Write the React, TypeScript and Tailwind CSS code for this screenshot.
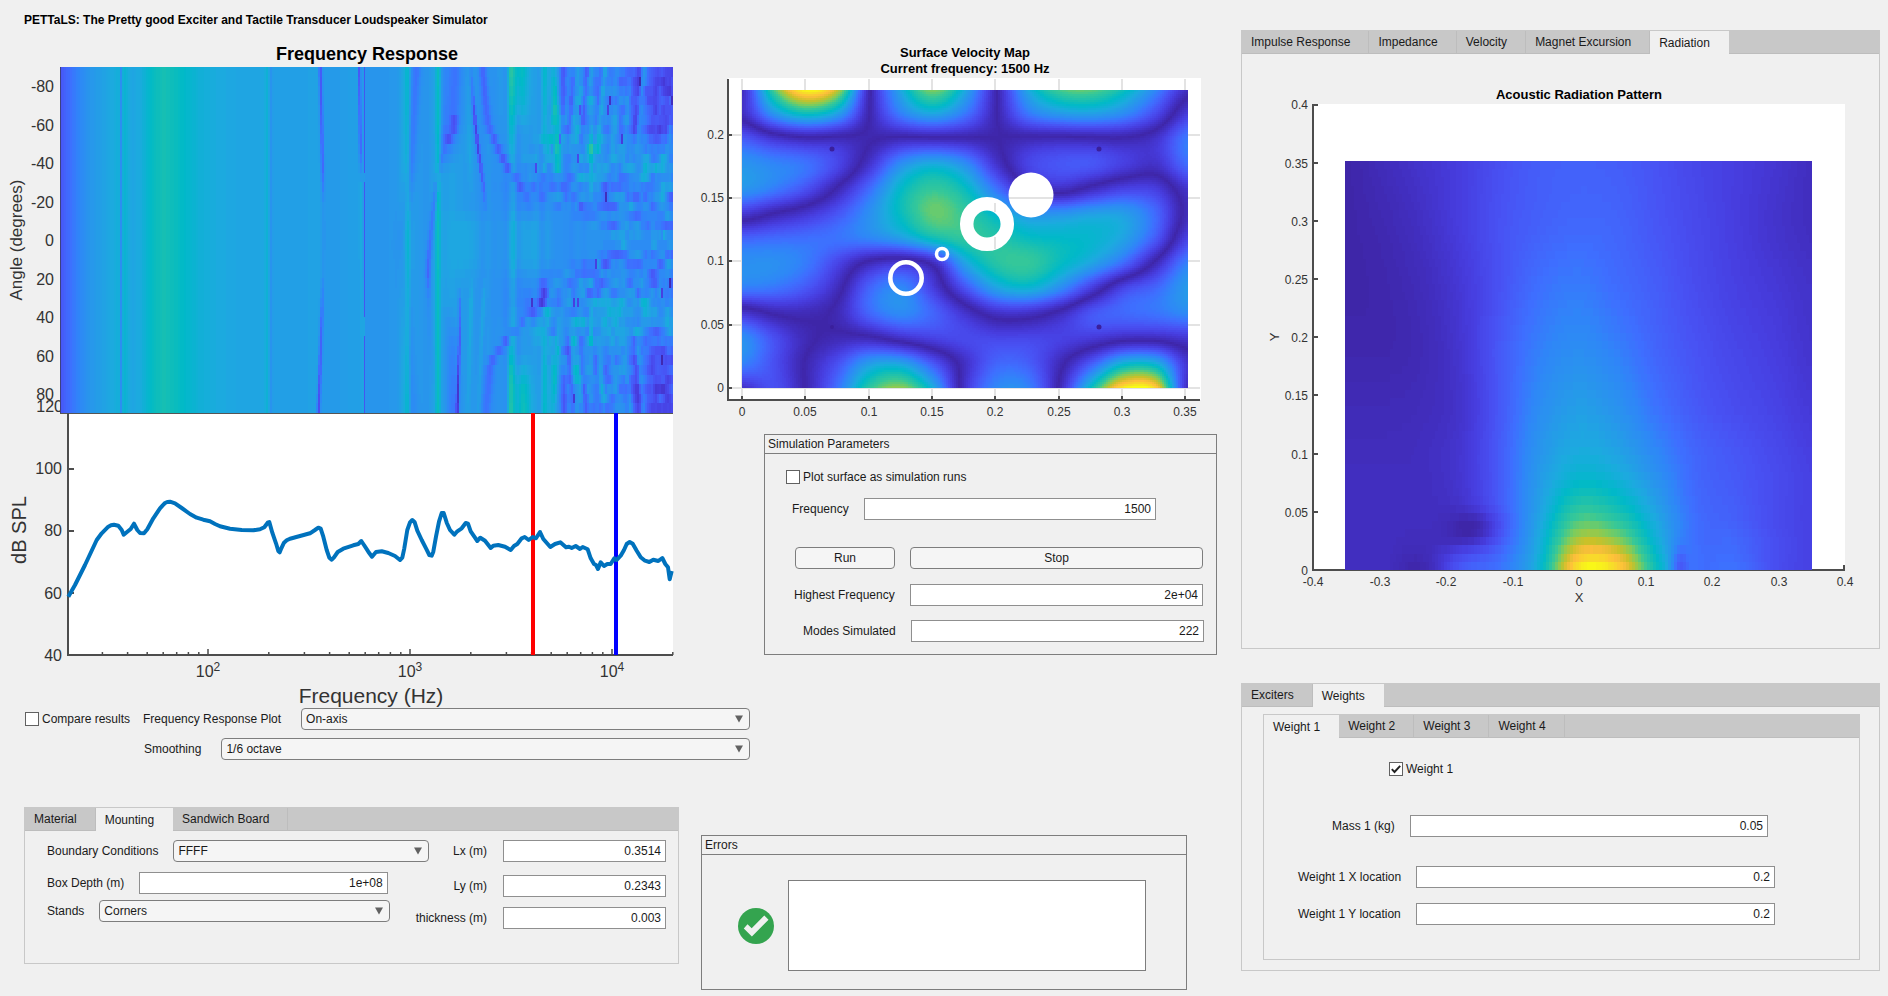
import React, { useId, useMemo } from "react";

const PARULA: [number, number, number, number][] = [
  [0, 62, 38, 168],
  [0.06, 66, 48, 196],
  [0.12, 71, 62, 224],
  [0.19, 72, 82, 244],
  [0.27, 62, 111, 255],
  [0.33, 46, 135, 247],
  [0.39, 39, 151, 235],
  [0.45, 28, 170, 223],
  [0.52, 0, 185, 200],
  [0.57, 24, 191, 178],
  [0.64, 55, 200, 151],
  [0.72, 129, 204, 89],
  [0.8, 201, 193, 41],
  [0.88, 254, 190, 60],
  [0.95, 246, 225, 38],
  [1, 249, 251, 21],
];

const LEVELS = 120;

function parula(t: number): string {
  for (let i = 1; i < PARULA.length; i++) {
    const [t1, r1, g1, b1] = PARULA[i];
    if (t <= t1) {
      const [t0, r0, g0, b0] = PARULA[i - 1];
      const f = (t - t0) / (t1 - t0);
      return `rgb(${Math.round(r0 + (r1 - r0) * f)},${Math.round(g0 + (g1 - g0) * f)},${Math.round(b0 + (b1 - b0) * f)})`;
    }
  }
  return "rgb(249,251,21)";
}

const clamp = (v: number, a: number, b: number) => Math.min(b, Math.max(a, v));

/** Catmull-Rom interpolation through p1..p2 */
function cubic(p0: number, p1: number, p2: number, p3: number, t: number) {
  return (
    p1 +
    0.5 * t * (p2 - p0 + t * (2 * p0 - 5 * p1 + 4 * p2 - p3 + t * (3 * (p1 - p2) + p3 - p0)))
  );
}

function sampleRow(row: number[], u: number) {
  const n = row.length;
  const i = clamp(Math.floor(u), 0, n - 2);
  const at = (k: number) => row[clamp(k, 0, n - 1)];
  return cubic(at(i - 1), at(i), at(i + 1), at(i + 2), u - i);
}

/** Bicubic sample; rows continue linearly past the first and last one. */
function sampleGrid(grid: number[][], u: number, v: number) {
  const n = grid.length;
  const j = clamp(Math.floor(v), 0, n - 2);
  const at = (k: number): number => {
    if (k < 0) return 2 * sampleRow(grid[0], u) - sampleRow(grid[1], u);
    if (k > n - 1) return 2 * sampleRow(grid[n - 1], u) - sampleRow(grid[n - 2], u);
    return sampleRow(grid[k], u);
  };
  return cubic(at(j - 1), at(j), at(j + 1), at(j + 2), v - j);
}

function piecewise(points: [number, number][], x: number) {
  if (x <= points[0][0]) return points[0][1];
  for (let i = 1; i < points.length; i++) {
    if (x <= points[i][0]) {
      const [x0, y0] = points[i - 1];
      const [x1, y1] = points[i];
      return y0 + ((y1 - y0) * (x - x0)) / (x1 - x0);
    }
  }
  return points[points.length - 1][1];
}

type HeatProps = {
  x: number;
  y: number;
  width: number;
  height: number;
  cols: number;
  rows: number;
  value: (u: number, v: number, col: number, row: number) => number;
};

/** Colour-mapped image; runs of one colour are merged into a single path. */
function Heat({ x, y, width, height, cols, rows, value }: HeatProps) {
  const paths = useMemo(() => {
    const byLevel: string[][] = Array.from({ length: LEVELS + 1 }, () => []);
    const cw = width / cols;
    const ch = height / rows;
    for (let r = 0; r < rows; r++) {
      const y0 = (y + r * ch).toFixed(2);
      let start = 0;
      let level = -1;
      for (let c = 0; c <= cols; c++) {
        const next =
          c < cols
            ? Math.round(clamp(value((c + 0.5) / cols, (r + 0.5) / rows, c, r), 0, 1) * LEVELS)
            : -2;
        if (next !== level) {
          if (level >= 0) {
            const w = ((c - start) * cw).toFixed(2);
            byLevel[level].push(`M${(x + start * cw).toFixed(2)} ${y0}h${w}v${ch.toFixed(2)}h-${w}z`);
          }
          start = c;
          level = next;
        }
      }
    }
    return byLevel;
  }, [x, y, width, height, cols, rows, value]);
  return (
    <g shapeRendering="crispEdges">
      <rect x={x} y={y} width={width} height={height} fill="#4556f0" />
      {paths.map((d, i) => (d.length ? <path key={i} d={d.join("")} fill={parula(i / LEVELS)} /> : null))}
    </g>
  );
}

/* ---------- surface velocity field (signed, percent) ---------- */

const SURFACE = [
  [5, 66, 100, 80, 2, -45, -72, -45, 0, 45, 66, 68, 55, 33, 5],
  [4, 36, 52, 40, 0, -30, -42, -28, 0, 28, 38, 40, 33, 15, -12],
  [-22, -10, -4, -4, -1, 4, 4, 3, 0, -3, -4, -3, -2, -8, -30],
  [-38, -33, -28, -15, 8, 36, 46, 36, 8, -14, -20, -20, -12, -7, -26],
  [-38, -30, -18, 2, 26, 52, 63, 54, 28, 2, -5, 5, 14, 12, -8],
  [-9, 1, 9, 20, 36, 54, 69, 63, 50, 38, 38, 42, 41, 25, -4],
  [24, 26, 27, 28, 32, 40, 54, 62, 60, 54, 52, 50, 42, 20, -14],
  [36, 36, 30, 14, -4, -10, 3, 42, 60, 63, 53, 42, 24, -4, -32],
  [30, 28, 20, 4, -24, -34, -12, 18, 42, 48, 34, 10, -15, -25, -40],
  [-9, 1, 3, -3, -24, -34, -24, -8, 6, 6, -4, -20, -25, -28, -34],
  [-36, -18, -3, 3, 3, -6, -13, -16, -15, -15, -13, -10, -4, -4, -9],
  [-32, -18, 1, 18, 40, 42, 20, -6, -24, -22, -3, 22, 48, 46, 8],
  [-6, -18, 1, 28, 62, 74, 46, -8, -34, -32, 4, 56, 98, 92, 4],
].map((row) => row.map((v) => v / 100));

const surfaceValue = (u: number, v: number) => Math.abs(sampleGrid(SURFACE, u * 14, v * 12));

/* ---------- radiation field (percent) ---------- */

const RADIATION_Y = [344, 500, 650, 800, 950, 1050, 1120, 1180, 1230, 1275, 1310, 1348];
const RADIATION = [
  [0, 4, 8, 12, 18, 22, 23, 22, 19, 15, 12, 9, 5],
  [0, 2, 6, 12, 19, 23, 25, 24, 20, 16, 12, 8, 5],
  [0, 1, 4, 10, 19, 27, 30, 26, 22, 17, 13, 10, 7],
  [1, 1, 3, 9, 21, 31, 35, 31, 24, 19, 15, 12, 8],
  [3, 3, 4, 8, 21, 35, 41, 37, 28, 21, 17, 14, 10],
  [4, 4, 5, 9, 22, 38, 45, 42, 33, 24, 20, 16, 12],
  [5, 5, 5, 9, 22, 40, 50, 47, 37, 25, 21, 17, 13],
  [5, 5, 5, 8, 22, 42, 58, 54, 41, 26, 22, 17, 13],
  [5, 5, 5, 6, 20, 44, 67, 62, 45, 27, 23, 17, 13],
  [5, 5, 4, 7, 22, 46, 77, 73, 48, 27, 25, 18, 13],
  [5, 5, 3, 16, 26, 48, 88, 85, 52, 28, 26, 18, 13],
  [5, 5, 1, 22, 29, 50, 98, 94, 56, 28, 28, 18, 13],
].map((row) => row.map((v) => v / 100));

const RADIATION_ROWS: [number, number][] = RADIATION_Y.map((y, i) => [y, i]);

const radiationValue = (u: number, v: number) => {
  const y = 344 + v * 1004;
  const x = 275 + u * 1113;
  const base = sampleGrid(RADIATION, u * 12, piecewise(RADIATION_ROWS, y));
  const blob = 0.09 * Math.exp(-(((x - 585) / 50) ** 2) - ((y - 1245) / 38) ** 2);
  const notch = 0.15 * Math.exp(-(((x - 1073) / 20) ** 2) - ((y - 1340) / 45) ** 2);
  return base - blob - notch;
};

/* ---------- polar frequency response ---------- */

const PROFILE: [number, number][] = [
  [136, 0.19], [150, 0.24], [165, 0.29], [200, 0.38], [240, 0.43], [270, 0.47], [275, 0.35],
  [280, 0.5], [290, 0.47], [300, 0.43], [320, 0.46], [345, 0.53], [372, 0.57], [410, 0.53],
  [450, 0.48], [500, 0.45], [560, 0.43], [600, 0.44], [609, 0.5], [614, 0.36], [622, 0.42],
  [700, 0.42], [723, 0.43], [734, 0.4], [760, 0.4], [812, 0.42], [822, 0.42], [830, 0.38],
  [900, 0.39], [915, 0.45], [924, 0.53], [934, 0.41], [970, 0.38], [985, 0.43], [993, 0.55],
  [1003, 0.42], [1040, 0.42], [1060, 0.41], [1100, 0.38], [1150, 0.38], [1166, 0.45],
  [1176, 0.38], [1200, 0.38], [1240, 0.38], [1280, 0.37], [1528, 0.37],
];

type Streak = { at: [number, number][]; width: number; gain: [number, number][] };

const STREAKS: Streak[] = [
  { at: [[200, 728], [720, 737], [1240, 724]], width: 4, gain: [[200, -0.22], [500, -0.16], [620, -0.02], [820, -0.02], [960, -0.16], [1240, -0.26]] },
  { at: [[200, 817], [1240, 826]], width: 3, gain: [[200, -0.24], [440, -0.22], [560, 0.04], [1240, 0.03]] },
  { at: [[200, 944], [500, 932], [720, 912], [900, 922], [1240, 938]], width: 12, gain: [[200, -0.12], [480, -0.1], [720, -0.05], [1240, -0.06]] },
  { at: [[200, 1030], [360, 1026], [500, 1008]], width: 20, gain: [[200, -0.14], [420, -0.14], [520, 0]] },
  { at: [[200, 1032], [390, 1030], [400, 1018]], width: 8, gain: [[340, 0], [362, -0.12], [420, -0.1], [440, 0]] },
  { at: [[440, 1008], [520, 994], [640, 982], [780, 972], [830, 971], [1240, 984]], width: 6, gain: [[440, -0.04], [560, -0.12], [720, -0.12], [820, -0.14], [900, -0.04], [1240, 0]] },
  { at: [[840, 1008], [1000, 1025], [1240, 1028]], width: 16, gain: [[900, 0], [1040, -0.1], [1240, -0.13]] },
  { at: [[200, 1068], [340, 1076], [440, 1084], [560, 1097], [720, 1110]], width: 4, gain: [[200, -0.04], [290, -0.12], [340, -0.24], [430, -0.26], [560, -0.12], [660, 0]] },
  { at: [[200, 1095], [380, 1108], [490, 1146], [600, 1200]], width: 9, gain: [[200, -0.12], [400, -0.14], [480, -0.16], [640, -0.02], [700, 0]] },
  { at: [[200, 1135], [440, 1150]], width: 10, gain: [[200, 0.02], [440, 0.02], [500, 0]] },
  { at: [[860, 1042], [1000, 1043], [1240, 1037]], width: 3, gain: [[860, 0], [900, -0.12], [1240, -0.3]] },
  { at: [[780, 1250], [900, 1235], [1000, 1160], [1090, 1112], [1240, 1104]], width: 10, gain: [[780, 0], [880, -0.12], [1090, -0.13], [1240, -0.1]] },
  { at: [[860, 1070], [1240, 1062]], width: 5, gain: [[820, 0], [900, 0.07], [1240, 0.02]] },
  { at: [[860, 1098], [1240, 1086]], width: 5, gain: [[820, 0], [900, 0.08], [1240, 0.04]] },
  { at: [[200, 1060], [600, 1070]], width: 6, gain: [[200, 0], [460, 0.05], [600, 0]] },
  { at: [[200, 1158], [1240, 1158]], width: 6, gain: [[200, 0.15], [400, 0.06], [500, 0], [980, 0], [1120, 0.14], [1240, 0.15]] },
  { at: [[200, 1180], [1240, 1186]], width: 20, gain: [[200, 0.16], [320, 0.1], [400, 0], [1060, 0], [1160, 0.14], [1240, 0.16]] },
  { at: [[200, 1235], [1240, 1235]], width: 8, gain: [[200, 0.15], [400, 0.1], [560, 0], [920, 0], [1060, 0.13], [1240, 0.15]] },
  { at: [[200, 1256], [480, 1266], [1000, 1265], [1240, 1254]], width: 9, gain: [[200, 0.1], [330, 0.22], [430, 0.18], [540, 0], [940, 0], [1080, 0.2], [1240, 0.1]] },
  { at: [[200, 1278], [1240, 1280]], width: 7, gain: [[200, -0.16], [320, -0.1], [380, 0], [1080, 0], [1160, -0.12], [1240, -0.15]] },
  { at: [[200, 1342], [1240, 1342]], width: 5, gain: [[200, 0.06], [360, 0.06], [450, 0.18], [560, 0.05], [620, 0], [860, 0], [1000, 0.18], [1080, 0.06], [1240, 0.02]] },
  { at: [[200, 1195], [1240, 1195]], width: 50, gain: [[420, 0], [560, -0.07], [620, -0.04], [680, 0.03], [780, 0.03], [850, -0.04], [920, -0.06], [1000, 0]] },
  { at: [[200, 1060], [1240, 1060]], width: 40, gain: [[620, 0], [680, 0.04], [780, 0.04], [860, 0]] },
];

function noise(a: number, b: number) {
  const s = Math.sin(a * 127.1 + b * 311.7) * 43758.5453;
  return s - Math.floor(s);
}

/** Noise that varies smoothly along the first axis, in -0.5..0.5 */
function smoothNoise(a: number, b: number) {
  const i = Math.floor(a);
  const f = a - i;
  const k = f * f * (3 - 2 * f);
  return noise(i, b) * (1 - k) + noise(i + 1, b) * k - 0.5;
}

const polarValue = (u: number, v: number, col: number, row: number) => {
  const x = 136 + u * 1392;
  const y = 201 + v * 1038;
  let t = piecewise(PROFILE, x);
  for (const s of STREAKS) {
    const d = (x - piecewise(s.at, y)) / s.width;
    t += piecewise(s.gain, y) * Math.exp(-d * d);
  }
  const off = Math.abs(y - 720);
  const onset = piecewise([[0, 1370], [60, 1300], [150, 1180], [240, 1150], [340, 1220], [520, 1275]], off);
  const ramp = clamp((x - onset) / 60, 0, 1);
  const texture = clamp((x - 990) / 120, 0, 1);
  const edge = clamp((off - 220) / 120, 0, 1);
  const band = piecewise([[0, 0.02], [30, -0.05], [150, -0.05], [200, 0.02], [270, 0.03], [340, -0.02], [520, -0.06]], off);
  const far = clamp((x - 1370) / 110, 0, 1);
  t += ramp * band - far * edge * 0.12;
  const shift = (row - 18) * (row < 18 ? -0.4 : 0.4);
  const wide = smoothNoise(col / 4, row + 40);
  const fine = smoothNoise(col / 1.8, row * 5 + 3);
  const slant = smoothNoise((col - shift) / 2.2, 7);
  t += ramp * (wide * (0.17 - 0.07 * edge) + fine * 0.09 + slant * 0.2 * edge);
  t += texture * smoothNoise(col / 3, 3) * 0.06;
  if (ramp > 0.6 && noise(col + 9, row * 3) > 0.992) t -= 0.22;
  if (off < 15 && x > 1200) t = Math.max(t, 0.35);
  return Math.max(t, 0.02);
};

const SPL_POINTS: [number, number][] = [
  [25, 320], [45, 285], [75, 225], [110, 150], [125, 130], [145, 110], [153, 106], [162, 104], [175, 107],
  [185, 120], [191, 134], [200, 127], [212, 117], [222, 101], [232, 120], [240, 129], [252, 130], [262, 118],
  [280, 85], [300, 55], [308, 46], [315, 39], [322, 36], [330, 35], [345, 40], [365, 54], [390, 72], [410, 83],
  [430, 89], [450, 94], [465, 102], [480, 109], [510, 116], [545, 120], [580, 121], [600, 118], [613, 112],
  [623, 98], [628, 96], [637, 128], [648, 160], [655, 183], [659, 187], [664, 175], [672, 158], [680, 151],
  [690, 146], [720, 138], [750, 130], [765, 120], [775, 113], [782, 116], [790, 140], [800, 180], [808, 203],
  [815, 209], [822, 202], [833, 186], [850, 176], [880, 166], [895, 162], [904, 153], [912, 165], [925, 185],
  [936, 200], [948, 186], [965, 184], [985, 189], [1005, 198], [1020, 210], [1027, 203], [1033, 175],
  [1042, 120], [1050, 97], [1057, 90], [1064, 97], [1072, 122], [1085, 150], [1098, 175], [1108, 195],
  [1115, 197], [1120, 185], [1128, 140], [1137, 95], [1145, 69], [1151, 69], [1160, 98], [1170, 120],
  [1183, 134], [1192, 124], [1205, 115], [1217, 99], [1224, 101], [1232, 124], [1245, 143], [1252, 153],
  [1261, 143], [1275, 152], [1292, 174], [1300, 167], [1315, 165], [1335, 170], [1352, 180], [1362, 168],
  [1372, 162], [1385, 145], [1394, 141], [1406, 150], [1418, 141], [1428, 145], [1440, 126], [1450, 147],
  [1471, 171], [1485, 162], [1501, 157], [1518, 172], [1527, 170], [1535, 174], [1547, 168], [1560, 177],
  [1568, 171], [1583, 178], [1592, 205], [1602, 222], [1608, 225], [1614, 237], [1622, 217], [1632, 228],
  [1642, 222], [1652, 222], [1663, 205], [1670, 210], [1682, 197], [1692, 180], [1700, 162], [1709, 156],
  [1718, 161], [1730, 182], [1742, 202], [1755, 212], [1768, 216], [1780, 209], [1795, 213], [1807, 204],
  [1816, 222], [1824, 232], [1829, 268], [1835, 243],
];

const SPL_LINE = SPL_POINTS.map(([x, y]) => `${(60 + x / 3).toFixed(1)},${(490 + y / 3).toFixed(1)}`).join(" ");

const DECADES = [
  { x: 208, power: 2 },
  { x: 410, power: 3 },
  { x: 612, power: 4 },
];

const MINOR_TICKS = [30, 40, 50, 60, 70, 80, 90, 200, 300, 400, 500, 600, 700, 800, 900, 2000, 3000, 4000, 5000, 6000, 7000, 8000, 9000, 20000].map(
  (f) => 208 + 202 * (Math.log10(f) - 2),
);

function ResponsePlots() {
  return (
    <svg viewBox="0 36 690 668" className="block w-full overflow-visible" role="img" aria-label="Frequency response plots">
      <text x="367" y="60" textAnchor="middle" className="fill-black text-[18px] font-bold">
        Frequency Response
      </text>
      <g className="fill-[#333333] text-[16px]" textAnchor="end">
        {["-80", "-60", "-40", "-20", "0", "20", "40", "60", "80"].map((label, i) => (
          <text key={label} x="54" y={Math.round(92 + i * 38.5)}>
            {label}
          </text>
        ))}
        <text x="63" y="412">120</text>
        <text x="62" y="474">100</text>
        <text x="62" y="536">80</text>
        <text x="62" y="599">60</text>
        <text x="62" y="661">40</text>
      </g>
      <text transform="translate(22 240) rotate(-90)" textAnchor="middle" className="fill-[#333333] text-[17px]">
        Angle (degrees)
      </text>
      <Heat x={60} y={67} width={613} height={346} cols={306} rows={36} value={polarValue} />
      <rect x="68" y="413" width="605" height="242" fill="#fff" />
      <path d="M60 413.5H673" stroke="#555" />
      <path d="M60.500 67V413" stroke="#333" strokeOpacity="0.6" />
      <g stroke="#4d4d4d" strokeWidth="2" fill="none">
        <path d="M68 413V655H673" />
        <path d="M68 469h6M68 531h6M68 593h6" />
        {DECADES.map((d) => (
          <path key={d.x} d={`M${d.x} 655v-6`} strokeWidth="1.500" />
        ))}
        {MINOR_TICKS.map((x) => (
          <path key={x} d={`M${x.toFixed(1)} 655v-3`} strokeWidth="1.500" />
        ))}
      </g>
      <path d="M533 413V655" stroke="#f00" strokeWidth="4" />
      <path d="M616 413V655" stroke="#00f" strokeWidth="4" />
      <polyline points={SPL_LINE} fill="none" stroke="#0072bd" strokeWidth="4" strokeLinejoin="round" />
      <g className="fill-[#333333] text-[16px]" textAnchor="middle">
        {DECADES.map((d) => (
          <text key={d.x} x={d.x} y="677">
            10
            <tspan dy="-6" className="text-[12px]">
              {d.power}
            </tspan>
          </text>
        ))}
      </g>
      <text x="371" y="703" textAnchor="middle" className="fill-[#333333] text-[21px]">
        Frequency (Hz)
      </text>
      <text transform="translate(26 530) rotate(-90)" textAnchor="middle" className="fill-[#333333] text-[20px]">
        dB SPL
      </text>
    </svg>
  );
}

const MAP_X = ["0", "0.05", "0.1", "0.15", "0.2", "0.25", "0.3", "0.35"];
const MAP_Y = ["0", "0.05", "0.1", "0.15", "0.2"];
const mapX = (i: number) => Math.round(742 + i * 63.3);
const mapY = (i: number) => Math.round(388 - i * 63.3);

function SurfaceMap() {
  return (
    <svg viewBox="690 36 550 388" className="block w-full" role="img" aria-label="Surface velocity map">
      <g className="fill-black text-[13px] font-bold" textAnchor="middle">
        <text x="965" y="57">Surface Velocity Map</text>
        <text x="965" y="73">Current frequency: 1500 Hz</text>
      </g>
      <rect x="728" y="78" width="473" height="322" fill="#fff" />
      <g stroke="#e3e3e3" strokeWidth="2">
        {MAP_X.map((l, i) => (
          <path key={l} d={`M${mapX(i)} 79V400`} />
        ))}
        {MAP_Y.map((l, i) => (
          <path key={l} d={`M728 ${mapY(i)}H1200`} />
        ))}
      </g>
      <Heat x={742} y={90} width={446} height={298} cols={223} rows={149} value={surfaceValue} />
      <g fill="#3a1f9c">
        <circle cx="832" cy="149" r="2.500" />
        <circle cx="1099" cy="149" r="2.500" />
        <circle cx="832" cy="327" r="2" />
        <circle cx="1099" cy="327" r="2.500" />
      </g>
      <circle cx="1031" cy="195" r="22.500" fill="#fff" />
      <circle cx="987" cy="224" r="20.300" fill="none" stroke="#fff" strokeWidth="13.500" />
      <circle cx="942" cy="254" r="5.500" fill="none" stroke="#fff" strokeWidth="3.500" />
      <circle cx="906" cy="278" r="15.700" fill="none" stroke="#fff" strokeWidth="4.600" />
      <path d="M1009 198H1053M995 203V212M995 237V249" stroke="#e3e3e3" strokeWidth="2" />
      <g stroke="#4d4d4d" strokeWidth="2" fill="none">
        <path d="M728 79V400H1200" />
        {MAP_X.map((l, i) => (
          <path key={l} d={`M${mapX(i)} 400v-4`} />
        ))}
        {MAP_Y.map((l, i) => (
          <path key={l} d={`M728 ${mapY(i)}h4`} />
        ))}
      </g>
      <g className="fill-[#333333] text-[12px]">
        {MAP_X.map((l, i) => (
          <text key={l} x={mapX(i)} y="416" textAnchor="middle">
            {l}
          </text>
        ))}
        {MAP_Y.map((l, i) => (
          <text key={l} x="724" y={mapY(i) + 4} textAnchor="end">
            {l}
          </text>
        ))}
      </g>
    </svg>
  );
}

const RAD_X = ["-0.4", "-0.3", "-0.2", "-0.1", "0", "0.1", "0.2", "0.3", "0.4"];
const RAD_Y = ["0", "0.05", "0.1", "0.15", "0.2", "0.25", "0.3", "0.35", "0.4"];

function RadiationPlot() {
  return (
    <svg viewBox="1242 54 637 594" className="block w-full" role="img" aria-label="Acoustic radiation pattern">
      <text x="1579" y="99" textAnchor="middle" className="fill-black text-[13px] font-bold">
        Acoustic Radiation Pattern
      </text>
      <rect x="1313" y="104" width="532" height="466" fill="#fff" />
      <path d="M1313 104V570H1844V565" fill="none" stroke="#4d4d4d" strokeWidth="2" />
      <Heat x={1345} y={161} width={467} height={409} cols={156} rows={50} value={radiationValue} />
      <path d="M1345 570.500H1812" stroke="#4d4d4d" />
      {RAD_Y.map((l, i) => {
        const y = Math.round(570 - i * 58.2);
        return (
          <g key={l}>
            {i > 0 && <path d={`M1313 ${i === 8 ? 105 : y}h5`} stroke="#4d4d4d" strokeWidth="2" />}
            <text x="1308" y={y + 5} textAnchor="end" className="fill-[#333333] text-[12px]">
              {l}
            </text>
          </g>
        );
      })}
      {RAD_X.map((l, i) => (
        <text key={l} x={Math.round(1313 + i * 66.5)} y="586" textAnchor="middle" className="fill-[#333333] text-[12px]">
          {l}
        </text>
      ))}
      <text x="1579" y="602" textAnchor="middle" className="fill-[#333333] text-[13px]">
        X
      </text>
      <text transform="translate(1279 337) rotate(-90)" textAnchor="middle" className="fill-[#333333] text-[13px]">
        Y
      </text>
    </svg>
  );
}

/* ---------- controls ---------- */

function NumberField({ label, value, className = "", gap = "gap-[15px]" }: { label: string; value: string; className?: string; gap?: string }) {
  const id = useId();
  return (
    <div className={`flex items-center ${gap} ${className}`}>
      <label htmlFor={id} className="whitespace-nowrap">
        {label}
      </label>
      <input
        id={id}
        type="text"
        defaultValue={value}
        className="h-[22px] w-0 min-w-0 flex-1 border border-[#8f8f8f] bg-white px-1 text-right outline-none"
      />
    </div>
  );
}

function SelectField({ label, options, className = "", gap = "gap-[15px]" }: { label: string; options: string[]; className?: string; gap?: string }) {
  const id = useId();
  return (
    <div className={`flex items-center ${gap} ${className}`}>
      <label htmlFor={id} className="whitespace-nowrap">
        {label}
      </label>
      <div className="relative flex-1">
        <select
          id={id}
          className="block h-[22px] w-full appearance-none rounded border border-[#7d7d7d] bg-[#f5f5f5] pr-6 pl-1 outline-none"
        >
          {options.map((o) => (
            <option key={o}>{o}</option>
          ))}
        </select>
        <svg viewBox="0 0 8 8" className="pointer-events-none absolute top-[7px] right-[7px] size-2" aria-hidden="true">
          <path d="M0 0.500h8L4 7.500z" fill="#616161" />
        </svg>
      </div>
    </div>
  );
}

function CheckField({ label, checked = false, className = "" }: { label: string; checked?: boolean; className?: string }) {
  return (
    <label className={`flex items-center gap-[3px] whitespace-nowrap ${className}`}>
      <span className="relative size-[14px]">
        <input
          type="checkbox"
          defaultChecked={checked}
          className="peer block size-[14px] appearance-none border border-[#616161] bg-white"
        />
        <svg viewBox="0 0 14 14" className="pointer-events-none absolute inset-0 hidden size-[14px] peer-checked:block" aria-hidden="true">
          <path d="M2.800 7.200L5.500 10L11.200 3.800" fill="none" stroke="#222" strokeWidth="1.900" />
        </svg>
      </span>
      {label}
    </label>
  );
}

function PushButton({ children, className = "" }: { children: React.ReactNode; className?: string }) {
  return (
    <button type="button" className={`h-[22px] rounded border border-[#7d7d7d] bg-[#f5f5f5] ${className}`}>
      {children}
    </button>
  );
}

function TabPanel({ tabs, active, className = "", children }: { tabs: string[]; active: string; className?: string; children: React.ReactNode }) {
  return (
    <section className={`border border-[#c8c8c8] ${className}`}>
      <div role="tablist" className="flex h-[23px] bg-[#c8c8c8]">
        {tabs.map((tab) => (
          <button
            key={tab}
            type="button"
            role="tab"
            aria-selected={tab === active}
            className={
              tab === active
                ? "bg-[#f0f0f0] pr-[19px] pl-[9px]"
                : "border-r border-b border-[#bdbdbd] pr-[18px] pl-[9px]"
            }
          >
            {tab}
          </button>
        ))}
        <span className="flex-1 border-b border-[#bdbdbd]" />
      </div>
      {children}
    </section>
  );
}

function TitledPanel({ title, className = "", children }: { title: string; className?: string; children: React.ReactNode }) {
  return (
    <section className={`border border-[#7d7d7d] ${className}`}>
      <h2 className="h-[19px] border-b border-[#7d7d7d] pl-[3px] leading-[18px]">{title}</h2>
      {children}
    </section>
  );
}

function SimulationParameters() {
  return (
    <TitledPanel title="Simulation Parameters" className="mt-[10px] mr-[23px] ml-[74px]">
      <div className="flex flex-col pt-[15px] pb-3">
        <CheckField label="Plot surface as simulation runs" className="ml-[21px] self-start" />
        <NumberField label="Frequency" value="1500" className="mt-[13px] mr-[60px] ml-[27px]" />
        <div className="mt-[27px] mr-[13px] ml-[30px] flex gap-[15px]">
          <PushButton className="w-[100px]">Run</PushButton>
          <PushButton className="flex-1">Stop</PushButton>
        </div>
        <NumberField label="Highest Frequency" value="2e+04" className="mt-[15px] mr-[13px] ml-[29px]" />
        <NumberField label="Modes Simulated" value="222" className="mt-[14px] mr-3 ml-[38px]" />
      </div>
    </TitledPanel>
  );
}

function MountingTab() {
  return (
    <TabPanel tabs={["Material", "Mounting", "Sandwich Board"]} active="Mounting" className="mr-[11px] ml-6 h-[157px]">
      <div className="grid grid-cols-[1fr_auto_163px] gap-x-4 pt-[9px] pr-3 pl-[22px]">
        <div className="flex flex-col">
          <SelectField label="Boundary Conditions" options={["FFFF", "CCCC", "SSSS"]} className="-mr-[29px]" />
          <NumberField label="Box Depth (m)" value="1e+08" className="mt-[10px] mr-3" />
          <SelectField label="Stands" options={["Corners", "None"]} className="mt-[6px] mr-[10px]" />
        </div>
        <div className="flex flex-col items-end text-right">
          <label htmlFor="lx" className="leading-[22px]">Lx (m)</label>
          <label htmlFor="ly" className="mt-[13px] leading-[22px]">Ly (m)</label>
          <label htmlFor="thickness" className="mt-[10px] leading-[22px] whitespace-nowrap">thickness (m)</label>
        </div>
        <div className="flex flex-col">
          <input id="lx" type="text" defaultValue="0.3514" className="h-[22px] border border-[#8f8f8f] bg-white px-1 text-right" />
          <input id="ly" type="text" defaultValue="0.2343" className="mt-[13px] h-[22px] border border-[#8f8f8f] bg-white px-1 text-right" />
          <input id="thickness" type="text" defaultValue="0.003" className="mt-[10px] h-[22px] border border-[#8f8f8f] bg-white px-1 text-right" />
        </div>
      </div>
    </TabPanel>
  );
}

function ErrorsPanel() {
  return (
    <TitledPanel title="Errors" className="mt-7 mr-[53px] ml-[11px] h-[155px]">
      <div className="flex pt-[25px] pr-10 pl-9">
        <svg viewBox="0 0 36 36" className="mt-7 mr-[14px] size-9 shrink-0" role="img" aria-label="No errors">
          <circle cx="18" cy="18" r="18" fill="#34a44f" />
          <path d="M5.800 20.500L9.500 16.300L13.700 20.300L26.300 7.500L30.500 11.700L13.900 28.500z" fill="#f0f0f0" />
        </svg>
        <textarea aria-label="Errors" readOnly className="block h-[91px] min-w-0 flex-1 resize-none border border-[#7d7d7d] bg-white" />
      </div>
    </TitledPanel>
  );
}

export default function App() {
  return (
    <main className="grid min-h-screen grid-cols-[1240fr_640fr] items-start bg-[#f0f0f0] pr-2 font-['Liberation_Sans',Arial,sans-serif] text-[12px] leading-4 text-[#1a1a1a]">
      <div>
        <h1 className="h-9 pt-3 pl-6 font-bold text-black">
          PETTaLS: The Pretty good Exciter and Tactile Transducer Loudspeaker Simulator
        </h1>
        <div className="grid grid-cols-[690fr_550fr] items-start">
          <ResponsePlots />
          <div>
            <SurfaceMap />
            <SimulationParameters />
          </div>
        </div>
        <div className="grid grid-cols-[750fr_490fr]">
          <div className="flex flex-col gap-2 pt-1 pl-[25px]">
            <div className="flex gap-[13px]">
              <CheckField label="Compare results" />
              <SelectField label="Frequency Response Plot" options={["On-axis", "Polar"]} gap="gap-5" className="flex-1" />
            </div>
            <SelectField label="Smoothing" options={["1/6 octave", "1/3 octave", "None"]} gap="gap-5" className="ml-[119px]" />
          </div>
        </div>
        <div className="mt-[47px] grid grid-cols-[690fr_550fr] items-start">
          <MountingTab />
          <ErrorsPanel />
        </div>
      </div>

      <div className="pt-[30px] pl-px">
        <TabPanel
          tabs={["Impulse Response", "Impedance", "Velocity", "Magnet Excursion", "Radiation"]}
          active="Radiation"
        >
          <RadiationPlot />
        </TabPanel>
        <TabPanel tabs={["Exciters", "Weights"]} active="Weights" className="mt-[34px] h-[288px]">
          <TabPanel
            tabs={["Weight 1", "Weight 2", "Weight 3", "Weight 4"]}
            active="Weight 1"
            className="mt-[7px] mr-[19px] ml-[21px] h-[246px]"
          >
            <div className="flex flex-col pt-[23px]">
              <CheckField label="Weight 1" checked className="ml-[125px] self-start" />
              <NumberField label="Mass 1 (kg)" value="0.05" className="mt-[38px] mr-[91px] ml-[68px]" />
              <NumberField label="Weight 1 X location" value="0.2" className="mt-[29px] mr-[84px] ml-[34px]" />
              <NumberField label="Weight 1 Y location" value="0.2" className="mt-[15px] mr-[84px] ml-[34px]" />
            </div>
          </TabPanel>
        </TabPanel>
      </div>
    </main>
  );
}
